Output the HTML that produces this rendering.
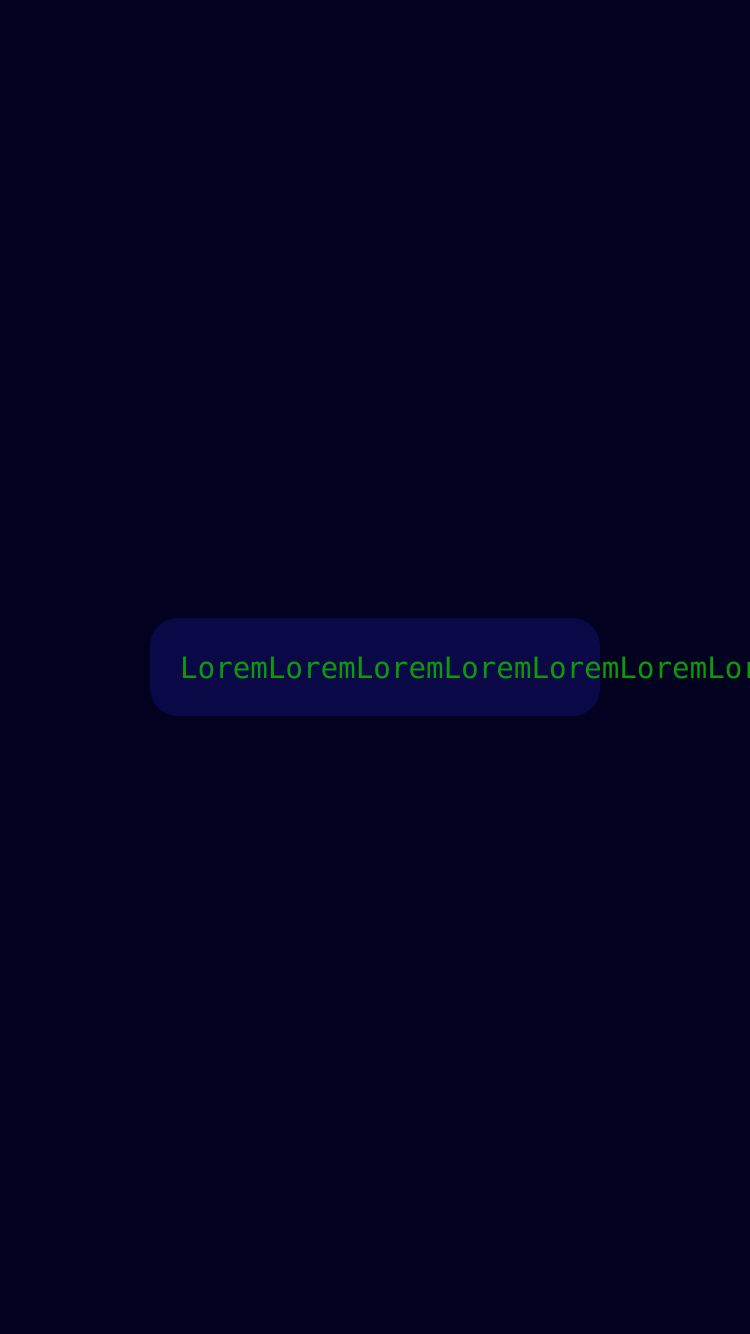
<!DOCTYPE html>
<html><head><style>
html,body{margin:0;padding:0;width:750px;height:1334px;background:#020220;overflow:hidden}
.box{position:absolute;left:150px;top:618px;width:450px;height:98px;background:#0a0847;border-radius:28px}
.t{position:absolute;left:180px;top:650px;font:29.2px/36px "DejaVu Sans Mono",monospace;color:#0a9a0c;white-space:nowrap}
</style></head><body>
<div class="box"></div>
<div class="t">LoremLoremLoremLoremLoremLoremLorem</div>
</body></html>
